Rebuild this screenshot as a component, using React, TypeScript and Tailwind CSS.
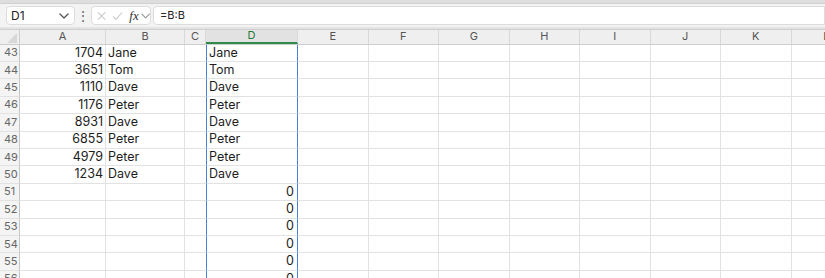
import React from "react";

const cols = [
  { n: "A", w: 86 },
  { n: "B", w: 79 },
  { n: "C", w: 21 },
  { n: "D", w: 92 },
  { n: "E", w: 70.5 },
  { n: "F", w: 70.5 },
  { n: "G", w: 70.5 },
  { n: "H", w: 70.5 },
  { n: "I", w: 70.5 },
  { n: "J", w: 70.5 },
  { n: "K", w: 70.5 },
  { n: "L", w: 70.5 },
];

const data: Record<number, [string, string, string]> = {
  43: ["1704", "Jane", "Jane"],
  44: ["3651", "Tom", "Tom"],
  45: ["1110", "Dave", "Dave"],
  46: ["1176", "Peter", "Peter"],
  47: ["8931", "Dave", "Dave"],
  48: ["6855", "Peter", "Peter"],
  49: ["4979", "Peter", "Peter"],
  50: ["1234", "Dave", "Dave"],
};

const rows = [43, 44, 45, 46, 47, 48, 49, 50, 51, 52, 53, 54, 55, 56];

function Chevron({ cls }: { cls: string }) {
  return (
    <svg width="10" height="6" viewBox="0 0 10 6" className={cls}>
      <path d="M1 1l4 4 4-4" fill="none" stroke="currentColor" strokeWidth="1.3" strokeLinecap="round" strokeLinejoin="round" />
    </svg>
  );
}

export default function App() {
  return (
    <div
      className="w-[825px] h-[278px] overflow-hidden bg-white text-[#1d1d1d]"
      style={{ fontFamily: "Inter, 'Liberation Sans', Arial, sans-serif" }}
    >
      {/* top strip */}
      <div className="h-[4px] bg-[#dedede] border-b border-[#d0d0d0]" />
      {/* formula bar */}
      <div className="h-[23px] bg-[#f3f3f3] flex items-center pl-[6px] gap-0">
        <div className="w-[69px] h-[19px] bg-white border border-[#dcdcdc] rounded-[4px] flex items-center justify-between pl-[4px] pr-[5px]">
          <span className="text-[12px] leading-none text-[#222]">D1</span>
          <Chevron cls="text-[#555]" />
        </div>
        <div className="w-[16px] flex justify-center text-[#555] text-[12px] leading-none">⋮</div>
        <div className="w-[60px] h-[19px] bg-white border border-[#dcdcdc] rounded-[4px] flex items-center pl-[5px] gap-[6px]">
          <svg width="10" height="10" viewBox="0 0 10 10" className="text-[#c8c8c8]">
            <path d="M1 1l8 8M9 1l-8 8" stroke="currentColor" strokeWidth="1.1" />
          </svg>
          <svg width="12" height="10" viewBox="0 0 12 10" className="text-[#c8c8c8]">
            <path d="M1 5.5l3.2 3.2L11 1.2" fill="none" stroke="currentColor" strokeWidth="1.1" />
          </svg>
          <span
            className="text-[13px] leading-none italic text-[#333]"
            style={{ fontFamily: "'Liberation Serif', 'Times New Roman', serif" }}
          >
            fx
          </span>
          <Chevron cls="text-[#999] -ml-[4px]" />
        </div>
        <div className="flex-1 h-[19px] ml-[2px] bg-white border border-[#dcdcdc] rounded-l-[4px] flex items-center pl-[6px]">
          <span className="text-[11px] leading-none text-[#222]">=B:B</span>
        </div>
      </div>
      {/* separator */}
      <div className="h-[3px] bg-[#e3e3e3] border-b border-[#cfcfcf]" />
      {/* column headers */}
      <div className="flex h-[14.6px] bg-[#efefef] border-b border-[#cdcdcd]">
        <div className="w-[20px] shrink-0 relative border-r border-[#cdcdcd]">
          <svg width="10" height="10" viewBox="0 0 10 10" className="absolute right-[2px] bottom-[1px]">
            <path d="M10 0L10 10L0 10Z" fill="#d8d8d8" />
          </svg>
        </div>
        {cols.map((c) => (
          <div
            key={c.n}
            style={{ width: c.w }}
            className={
              "shrink-0 flex items-center justify-center text-[11px] leading-none border-r border-[#d8d8d8] " +
              (c.n === "D"
                ? "bg-[#e2e2e2] text-[#1e7a3c] border-b-2 border-b-[#2e8b4b]"
                : "text-[#555]")
            }
          >
            {c.n}
          </div>
        ))}
      </div>
      {/* rows */}
      {rows.map((r) => {
        const d = data[r];
        return (
          <div key={r} className="flex h-[17.4px]">
            <div className="w-[20px] shrink-0 bg-[#f4f4f4] border-r border-[#c6c6c6] border-b border-b-[#e2e2e2] flex items-center pl-[4px] text-[11px] leading-none text-[#666]">
              {r}
            </div>
            {cols.map((c) => {
              let content = "";
              let right = false;
              if (d) {
                if (c.n === "A") { content = d[0]; right = true; }
                if (c.n === "B") content = d[1];
                if (c.n === "D") content = d[2];
              } else if (c.n === "D") {
                content = "0";
                right = true;
              }
              const isD = c.n === "D";
              const isC = c.n === "C";
              return (
                <div
                  key={c.n}
                  style={{ width: c.w }}
                  className={
                    "shrink-0 flex items-center text-[12.5px] leading-none border-b border-[#e2e2e2] px-[2px] " +
                    (right ? "justify-end " : "justify-start ") +
                    (isD
                      ? "border-x border-x-[#4a7fd8] pr-[3px] "
                      : isC
                      ? ""
                      : "border-r border-r-[#e2e2e2] ")
                  }
                >
                  {content}
                </div>
              );
            })}
          </div>
        );
      })}
    </div>
  );
}
